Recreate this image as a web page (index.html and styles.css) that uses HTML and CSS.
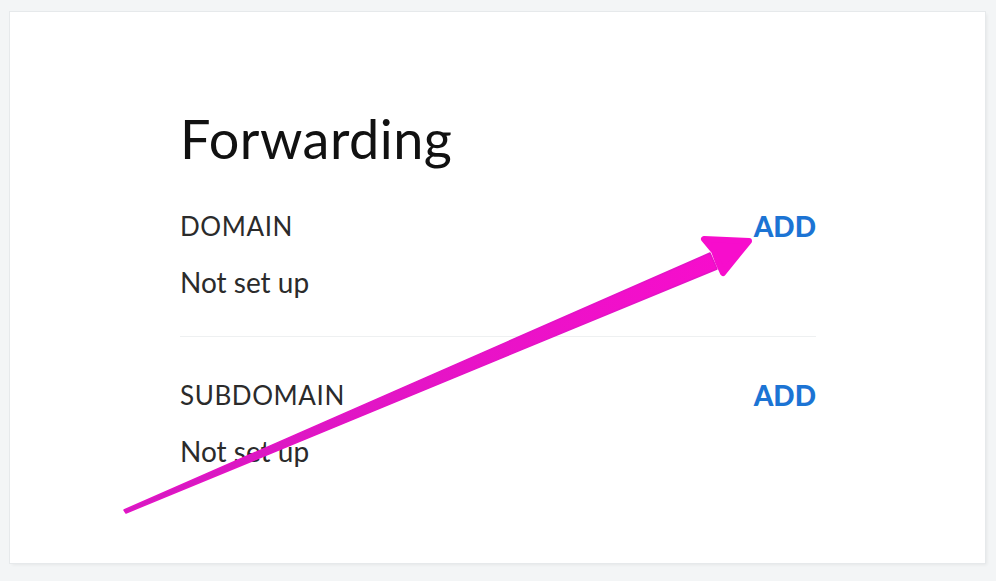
FILE: index.html
```html
<!DOCTYPE html>
<html lang="en">
  <head>
    <meta charset="UTF-8" />
    <meta name="viewport" content="width=device-width, initial-scale=1.0" />
    <title>Forwarding</title>
    <link rel="stylesheet" href="styles.css">
  </head>
  <body>
    <div id="page_wrap">
      <div class="card">
        <h1 class="card_title">Forwarding</h1>
        <div class="fwd_row">
          <div class="fwd_info">
            <h4 class="fwd_label">DOMAIN</h4>
            <p class="fwd_status">Not set up</p>
          </div>
          <a class="fwd_add" href="#">ADD</a>
        </div>
        <div class="fwd_row">
          <div class="fwd_info">
            <h4 class="fwd_label">SUBDOMAIN</h4>
            <p class="fwd_status">Not set up</p>
          </div>
          <a class="fwd_add" href="#">ADD</a>
        </div>
      </div>
      <!-- annotation arrow drawn over the card -->
      <svg class="arrow" width="996" height="581" viewBox="0 0 996 581">
        <defs>
          <linearGradient id="shaft" x1="0" y1="0" x2="1" y2="0">
            <stop offset="0" stop-color="#d21cc0" />
            <stop offset="1" stop-color="#f70dcc" />
          </linearGradient>
        </defs>
        <path d="M124 510 L710 253 L717 269 L126 513 Z" fill="url(#shaft)" stroke="#e413c6" stroke-width="1.5" stroke-linejoin="round" />
        <path d="M704 239 L749 241 L723 273 L718 262 L714 251 Z" fill="#f70dcc" stroke="#f70dcc" stroke-width="6" stroke-linejoin="round" />
      </svg>
    </div>
  </body>
</html>
```

FILE: styles.css
```css
* {
  margin: 0;
  padding: 0;
  box-sizing: border-box;
}
body {
  background: #f3f5f6;
  font-family: Lato, "Open Sans", sans-serif;
}
#page_wrap {
  position: relative;
  width: 996px;
  height: 581px;
  padding: 12px 11px 18px 10px;
}
.card {
  height: 100%;
  background: #fff;
  box-shadow: 0 0 0 1px #e6e9eb, 2px 2px 3px rgba(0, 0, 0, 0.06);
  padding: 95px 169px 0 170px;
}
.card_title {
  font-size: 54px;
  font-weight: 400;
  color: #111;
  line-height: 64px;
  letter-spacing: 0.5px;
  margin-bottom: 39px;
}
.fwd_row {
  display: flex;
  justify-content: space-between;
  align-items: flex-start;
  padding-bottom: 38px;
}
.fwd_row + .fwd_row {
  border-top: 1px solid #eef0f1;
  padding-top: 42px;
}
.fwd_label {
  font-size: 26px;
  font-weight: 400;
  color: #2b2b2b;
  line-height: 32px;
  letter-spacing: 0.6px;
}
.fwd_status {
  font-size: 28px;
  color: #2b2b2b;
  line-height: 32px;
  margin-top: 24px;
}
.fwd_add {
  font-size: 28px;
  font-weight: 900;
  color: #1c74d4;
  text-decoration: none;
  line-height: 32px;
}
.arrow {
  position: absolute;
  left: 0;
  top: 0;
  pointer-events: none;
}
```
